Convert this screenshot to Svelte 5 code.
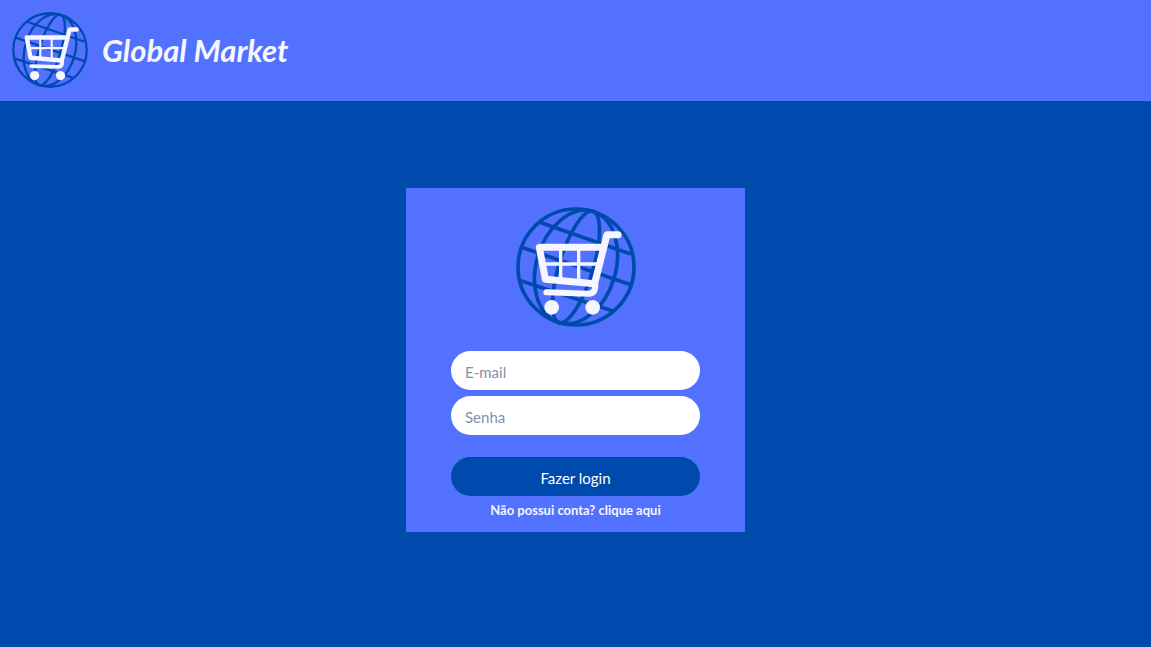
<script>
  let email = $state('');
  let password = $state('');
</script>

{#snippet logo()}
  <svg class="logo" viewBox="31 29 360 360" aria-hidden="true">
    <g fill="none" stroke="#004aad" stroke-width="11">
      <circle cx="211" cy="209" r="174" />
      <ellipse cx="211" cy="209" rx="119" ry="174" transform="rotate(17 211 209)" />
      <ellipse cx="211" cy="209" rx="51" ry="174" transform="rotate(17 211 209)" />
      <path d="M100 74L375 170M48 150L380 264M45 250L324 342" />
    </g>
    <g fill="none" stroke="#f5f6ff" stroke-linecap="round" stroke-linejoin="round">
      <path stroke-width="10" d="M165 155V250M219 155V255M112 200H278" />
      <path stroke-width="21" d="M337 112H304L267 259L119 246L101 150H290" />
      <path stroke-width="18" d="M122 285L250 289Q269 289 269 264" />
    </g>
    <g fill="#f5f6ff">
      <circle cx="138" cy="330" r="22" />
      <circle cx="261" cy="330" r="22" />
    </g>
  </svg>
{/snippet}

<div class="page">
  <header>
    <div class="brand-logo">{@render logo()}</div>
    <h1>Global Market</h1>
  </header>
  <main>
    <form class="card" onsubmit={(event) => event.preventDefault()}>
      <div class="card-logo">{@render logo()}</div>
      <div class="fields">
        <input type="email" placeholder="E-mail" aria-label="E-mail" bind:value={email} />
        <input type="password" placeholder="Senha" aria-label="Senha" bind:value={password} />
      </div>
      <button type="submit">Fazer login</button>
      <a href="#cadastro">Não possui conta? clique aqui</a>
    </form>
  </main>
</div>

<style>
  :global(body) {
    margin: 0;
    background: #004aad;
  }

  .page {
    min-height: 100vh;
    display: flex;
    flex-direction: column;
    background: #004aad;
    font-family: Lato, sans-serif;
  }

  header {
    display: flex;
    align-items: center;
    gap: 14px;
    padding: 12px 12px 13px;
    background: #5271ff;
  }

  .logo {
    display: block;
    width: 100%;
  }

  .brand-logo {
    width: 76px;
  }

  h1 {
    margin: 0;
    color: #f5f6ff;
    font-size: 31px;
    line-height: 40px;
    font-weight: 700;
    font-style: italic;
  }

  main {
    flex: 1;
    display: flex;
    align-items: center;
    justify-content: center;
    padding-bottom: 28px;
  }

  .card {
    box-sizing: border-box;
    width: 100%;
    max-width: 339px;
    display: flex;
    flex-direction: column;
    padding: 19px 45px 8px;
    background: #5271ff;
  }

  .card-logo {
    width: 120px;
    align-self: center;
    margin-bottom: 24px;
  }

  .fields {
    display: flex;
    flex-direction: column;
    gap: 6px;
    margin-bottom: 22px;
  }

  input,
  button {
    box-sizing: border-box;
    width: 100%;
    height: 39px;
    padding: 2px 14px 0;
    border: 0;
    border-radius: 20px;
    font-family: inherit;
    font-size: 15px;
  }

  input {
    background: #fff;
    color: #334;
  }

  input::placeholder {
    color: #8292a6;
    opacity: 1;
  }

  button {
    background: #004aad;
    color: #fff;
    cursor: pointer;
  }

  a {
    align-self: center;
    padding: 4px 0;
    color: #f5f6ff;
    font-size: 13px;
    line-height: 20px;
    font-weight: 700;
    text-decoration: none;
  }
</style>
